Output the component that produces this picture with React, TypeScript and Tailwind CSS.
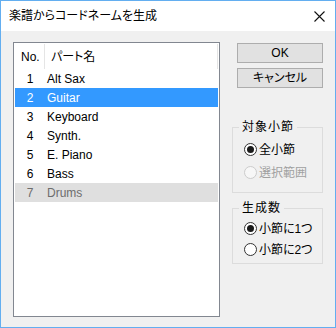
const jp = "font-['Liberation_Sans','Noto_Sans_CJK_JP',sans-serif] [font-feature-settings:'palt']";

const parts = [
  { no: 1, name: "Alt Sax" },
  { no: 2, name: "Guitar", selected: true },
  { no: 3, name: "Keyboard" },
  { no: 4, name: "Synth." },
  { no: 5, name: "E. Piano" },
  { no: 6, name: "Bass" },
  { no: 7, name: "Drums", disabled: true },
];

function Radio({ label, checked, disabled }: { label: string; checked?: boolean; disabled?: boolean }) {
  return (
    <div className="flex items-center h-[21px]">
      <div
        className={
          "w-[13px] h-[13px] rounded-full border flex items-center justify-center " +
          (disabled ? "border-[#cccccc] bg-[#f7f7f7]" : "border-[#333333] bg-white")
        }
      >
        {checked && <div className="w-[7px] h-[7px] rounded-full bg-[#1a1a1a]" />}
      </div>
      <span className={"ml-[2px] text-[12px] " + (disabled ? "text-[#a0a0a0]" : "text-black")}>{label}</span>
    </div>
  );
}

export default function App() {
  return (
    <div className={"w-[336px] h-[328px] border border-[#63aef0] flex flex-col bg-[#f0f0f0] " + jp}>
      {/* Title bar */}
      <div className="h-[30px] bg-white flex items-center justify-between pl-[8px] pr-[10px]">
        <span className="text-[12px] text-black">楽譜からコードネームを生成</span>
        <svg width="11" height="11" viewBox="0 0 11 11">
          <path d="M0.5 0.5 L10.5 10.5 M10.5 0.5 L0.5 10.5" stroke="#111" strokeWidth="1.1" />
        </svg>
      </div>

      <div className="flex pt-[11px] pl-[12px]">
        {/* Part list */}
        <div className="w-[207px] h-[275px] border border-[#828790] bg-white p-[1px] text-[12px]">
          <div className="flex h-[25px] items-center">
            <div className="w-[30px] pl-[6px] h-full flex items-center border-r border-[#e5e5e5]">No.</div>
            <div className="flex-1 pl-[6px] h-full flex items-center border-r border-[#e5e5e5]">パート名</div>
          </div>
          {parts.map((p) => (
            <div
              key={p.no}
              className={
                "flex h-[19px] items-center " +
                (p.selected ? "bg-[#3399ff] text-white" : p.disabled ? "bg-[#dfdfdf] text-[#6d6d6d]" : "text-black")
              }
            >
              <div className="w-[30px] text-center">{p.no}</div>
              <div className="pl-[2px]">{p.name}</div>
            </div>
          ))}
        </div>

        {/* Right column */}
        <div className="ml-[12px] w-[91px] pt-[1px] text-[12px]">
          <div className="pl-[5px] flex flex-col gap-[5px]">
            <button className="w-[86px] h-[20px] bg-[#e1e1e1] border border-[#adadad] flex items-center justify-center">
              OK
            </button>
            <button className="w-[86px] h-[20px] bg-[#e1e1e1] border border-[#adadad] flex items-center justify-center">
              キャンセル
            </button>
          </div>

          <fieldset className="mt-[31px] border border-[#dcdcdc] h-[74px] pl-[11px] pt-[4px] flex flex-col gap-[2px]">
            <legend className="ml-[-5px] px-[3px] text-[12px] leading-[16px] tracking-[1px]">対象小節</legend>
            <Radio label="全小節" checked />
            <Radio label="選択範囲" disabled />
          </fieldset>

          <fieldset className="mt-[7px] border border-[#dcdcdc] h-[64px] pl-[11px] pt-[2px]">
            <legend className="ml-[-5px] px-[3px] text-[12px] leading-[16px] tracking-[1px]">生成数</legend>
            <Radio label="小節に1つ" checked />
            <Radio label="小節に2つ" />
          </fieldset>
        </div>
      </div>
    </div>
  );
}
